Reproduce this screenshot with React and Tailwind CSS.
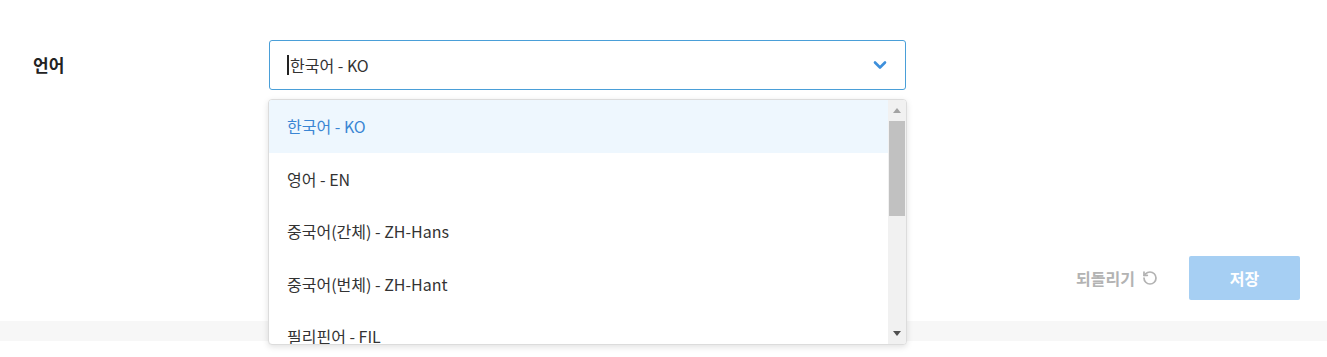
import { RotateCcw } from "lucide-react";

const options = [
  "한국어 - KO",
  "영어 - EN",
  "중국어(간체) - ZH-Hans",
  "중국어(번체) - ZH-Hant",
  "필리핀어 - FIL",
];

export default function App() {
  return (
    <div
      className="w-full h-[357px] bg-white overflow-hidden text-[#222]"
      style={{ fontFamily: '"Noto Sans CJK KR", "Noto Sans", sans-serif' }}
    >
      {/* Language row */}
      <div className="flex items-center pt-[40px]">
        <div className="w-[269px] pl-[33px] text-[17px] font-semibold text-[#222]">언어</div>
        <div className="relative">
          <div className="w-[637px] h-[50px] border border-[#4a9fd8] rounded-[3px] flex items-center justify-between pl-[17px] pr-[17px]">
            <div className="flex items-center text-[16px] text-[#333]">
              <span className="w-[2px] h-[20px] bg-[#222] mr-[1px]" />
              한국어 - KO
            </div>
            <svg width="14" height="10" viewBox="0 0 14 10" className="mr-[1px]">
              <path d="M2 2.5 L7 7.5 L12 2.5" fill="none" stroke="#3d8fdb" strokeWidth="2.6" strokeLinecap="round" strokeLinejoin="round" />
            </svg>
          </div>

          {/* Dropdown list */}
          <div className="absolute left-[-1px] top-[59px] w-[639px] h-[246px] bg-white border border-[#dcdcdc] rounded-[4px] shadow-[0_2px_6px_rgba(0,0,0,0.12)] overflow-hidden flex z-10">
            <div className="flex-1 overflow-hidden">
              {options.map((o, i) => (
                <div
                  key={o}
                  className={`h-[52.5px] flex items-center pl-[18px] text-[16px] ${
                    i === 0 ? "bg-[#eef7fe] text-[#3a86d4]" : "text-[#333]"
                  }`}
                >
                  {o}
                </div>
              ))}
            </div>
            <div className="w-[18px] bg-[#f1f1f1] flex flex-col items-center">
              <div className="h-[21px] flex items-center justify-center">
                <svg width="8" height="5" viewBox="0 0 8 5">
                  <path d="M0 5 L4 0 L8 5 Z" fill="#a3a3a3" />
                </svg>
              </div>
              <div className="w-[16px] h-[95px] bg-[#c1c1c1]" />
              <div className="flex-1" />
              <div className="h-[21px] flex items-center justify-center">
                <svg width="8" height="5" viewBox="0 0 8 5">
                  <path d="M0 0 L8 0 L4 5 Z" fill="#505050" />
                </svg>
              </div>
            </div>
          </div>
        </div>
      </div>

      {/* Actions */}
      <div className="flex justify-end items-center pr-[27px] mt-[166px]">
        <div className="flex items-center gap-[7px] text-[16px] font-bold text-[#b3b3b3] mr-[31px]">
          되돌리기
          <RotateCcw size={16} strokeWidth={2.6} className="text-[#b3b3b3]" />
        </div>
        <div className="w-[111px] h-[44px] bg-[#a6cff3] rounded-[2px] flex items-center justify-center text-white text-[16px] font-bold">
          저장
        </div>
      </div>

      {/* Footer band */}
      <div className="mt-[21px] h-[20px] bg-[#f7f7f7]" />
    </div>
  );
}
